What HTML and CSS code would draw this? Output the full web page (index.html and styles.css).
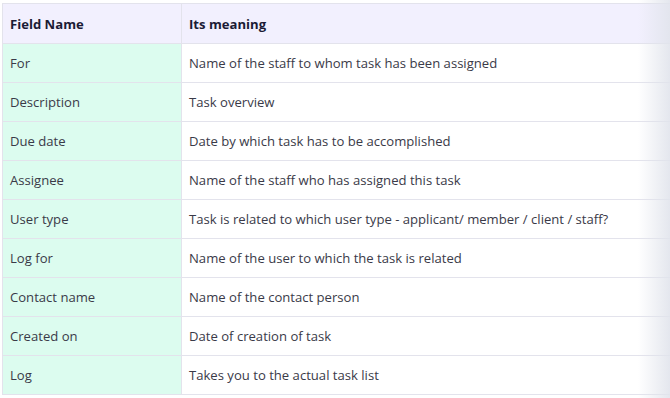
FILE: index.html
```html
<!DOCTYPE html>
<html>
<head>
<meta charset="utf-8">
<link rel="stylesheet" href="styles.css">
</head>
<body>
<div class="wrap">
<table class="fields">
<thead>
<tr><th class="c1">Field Name</th><th class="c2">Its meaning</th></tr>
</thead>
<tbody>
<tr><td class="c1">For</td><td class="c2">Name of the staff to whom task has been assigned</td></tr>
<tr><td class="c1">Description</td><td class="c2">Task overview</td></tr>
<tr><td class="c1">Due date</td><td class="c2">Date by which task has to be accomplished</td></tr>
<tr><td class="c1">Assignee</td><td class="c2">Name of the staff who has assigned this task</td></tr>
<tr><td class="c1">User type</td><td class="c2">Task is related to which user type - applicant/ member / client / staff?</td></tr>
<tr><td class="c1">Log for</td><td class="c2">Name of the user to which the task is related</td></tr>
<tr><td class="c1">Contact name</td><td class="c2">Name of the contact person</td></tr>
<tr><td class="c1">Created on</td><td class="c2">Date of creation of task</td></tr>
<tr><td class="c1">Log</td><td class="c2">Takes you to the actual task list</td></tr>
</tbody>
</table>
<div class="fade"></div>
</div>
</body>
</html>
```
FILE: styles.css
```css
html, body {
  margin: 0;
  padding: 0;
  background: #ffffff;
}
body {
  font-family: "Open Sans", "Noto Sans", sans-serif;
  font-size: 13.1px;
  color: #3a3a48;
}
.wrap {
  position: relative;
  width: 670px;
  height: 398px;
  overflow: hidden;
  padding: 3px 0 0 2px;
  box-sizing: border-box;
}
.fields {
  border-collapse: collapse;
  width: 720px;
  table-layout: fixed;
}
.fields th, .fields td {
  border: 1.5px solid #e3e3ec;
  text-align: left;
  padding: 0 7px;
  white-space: nowrap;
}
.fields th {
  height: 39px;
  background: #f2f0fe;
  color: #1b1b35;
  font-weight: 700;
}
.fields td {
  height: 38px;
}
.fields .c1 {
  width: 164px;
}
.fields td.c1 {
  background: #dcfcef;
}
.fields td.c2 {
  background: #ffffff;
}
.fade {
  position: absolute;
  top: 0;
  right: 0;
  width: 32px;
  height: 100%;
  background: linear-gradient(to right, rgba(230, 232, 240, 0), rgba(225, 228, 236, 0.9));
  pointer-events: none;
}
```
